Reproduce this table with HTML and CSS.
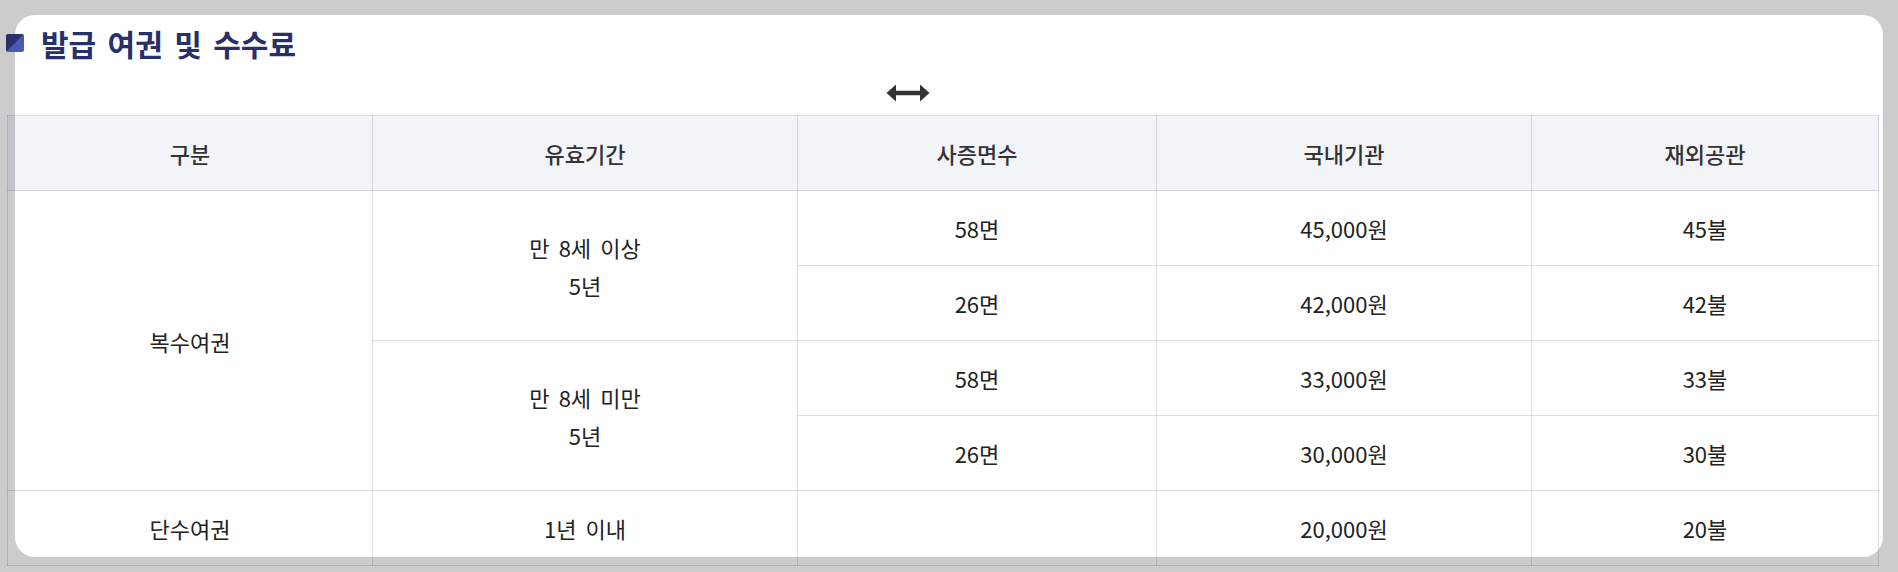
FILE: index.html
```html
<!DOCTYPE html>
<html lang="ko">
<head>
<meta charset="utf-8">
<title>발급 여권 및 수수료</title>
<link rel="stylesheet" href="styles.css">
</head>
<body>
<div class="card">
  <div class="content">
    <div class="title-row">
      <span class="title-mark"></span>
      <h2 class="title">발급 여권 및 수수료</h2>
    </div>
    <div class="hint-row">
      <svg class="hint-arrow" width="44" height="18" viewBox="0 0 44 18" aria-hidden="true">
        <path d="M0.5 9 L10 0.5 L10 6.8 L34 6.8 L34 0.5 L43.5 9 L34 17.5 L34 11.2 L10 11.2 L10 17.5 Z" fill="#333"/>
      </svg>
    </div>
    <table class="fee-table">
      <colgroup>
        <col class="c1"><col class="c2"><col class="c3"><col class="c4"><col class="c5">
      </colgroup>
      <thead>
        <tr>
          <th>구분</th>
          <th>유효기간</th>
          <th>사증면수</th>
          <th>국내기관</th>
          <th>재외공관</th>
        </tr>
      </thead>
      <tbody>
        <tr>
          <td rowspan="4">복수여권</td>
          <td rowspan="2" class="multi">만 8세 이상<br>5년</td>
          <td>58면</td>
          <td>45,000원</td>
          <td>45불</td>
        </tr>
        <tr>
          <td>26면</td>
          <td>42,000원</td>
          <td>42불</td>
        </tr>
        <tr>
          <td rowspan="2" class="multi">만 8세 미만<br>5년</td>
          <td>58면</td>
          <td>33,000원</td>
          <td>33불</td>
        </tr>
        <tr>
          <td>26면</td>
          <td>30,000원</td>
          <td>30불</td>
        </tr>
        <tr>
          <td>단수여권</td>
          <td>1년 이내</td>
          <td></td>
          <td>20,000원</td>
          <td>20불</td>
        </tr>
      </tbody>
    </table>
  </div>
</div>
</body>
</html>
```

FILE: styles.css
```css
html, body {
  margin: 0;
  padding: 0;
}
body {
  background: #cccccc;
  font-family: "Noto Sans CJK KR", "Noto Sans", sans-serif;
  color: #222;
  overflow: hidden;
  height: 572px;
}
.card {
  margin: 15px 15px 0 15px;
  height: 542px;
  background: #ffffff;
  border-radius: 20px;
}
.content {
  margin-left: -8px;
  width: 1871px;
}
.title-row {
  display: flex;
  align-items: center;
  height: 56px;
}
.title-mark {
  width: 18px;
  height: 18px;
  margin-left: -1px;
  border-radius: 2px;
  background: linear-gradient(135deg, #242c64 0%, #2a3370 48%, #4658b0 52%, #4b5cb6 100%);
  flex: none;
}
.title {
  margin: 0 0 0 17px;
  font-size: 30px;
  font-weight: 700;
  color: #27306b;
  line-height: 1;
  word-spacing: 3px;
}
.hint-row {
  height: 44px;
  display: flex;
  align-items: center;
  padding-left: 879px;
}
.hint-arrow {
  display: block;
}
.fee-table {
  width: 1871px;
  table-layout: fixed;
  border-collapse: collapse;
  font-size: 22px;
  word-spacing: 3px;
}
.c1 { width: 365px; }
.c2 { width: 425px; }
.c3 { width: 359px; }
.c4 { width: 375px; }
.c5 { width: 347px; }
.fee-table th,
.fee-table td {
  border: 1px solid rgba(20, 20, 60, 0.14);
  text-align: center;
  vertical-align: middle;
  height: 74px;
  padding: 0;
}
.fee-table th {
  background: rgba(40, 60, 140, 0.06);
  font-weight: 500;
  color: #333;
}
.fee-table td {
  color: #222;
  font-weight: 400;
}
.fee-table td.multi {
  line-height: 38px;
}
```
